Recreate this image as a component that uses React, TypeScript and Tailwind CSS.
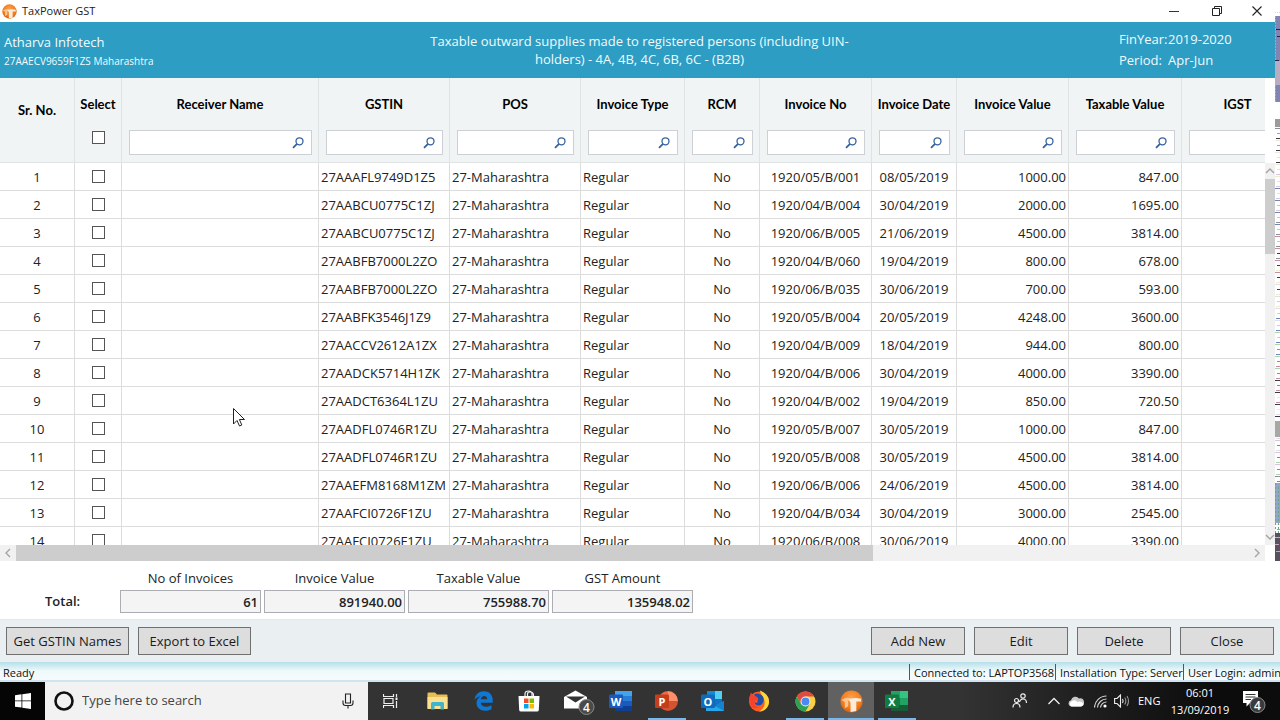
import { useState } from "react";
import type { ReactNode } from "react";

type Invoice = {
  gstin: string;
  no: string;
  date: string;
  value: string;
  taxable: string;
};

const invoices: Invoice[] = [
  { gstin: "27AAAFL9749D1Z5", no: "1920/05/B/001", date: "08/05/2019", value: "1000.00", taxable: "847.00" },
  { gstin: "27AABCU0775C1ZJ", no: "1920/04/B/004", date: "30/04/2019", value: "2000.00", taxable: "1695.00" },
  { gstin: "27AABCU0775C1ZJ", no: "1920/06/B/005", date: "21/06/2019", value: "4500.00", taxable: "3814.00" },
  { gstin: "27AABFB7000L2ZO", no: "1920/04/B/060", date: "19/04/2019", value: "800.00", taxable: "678.00" },
  { gstin: "27AABFB7000L2ZO", no: "1920/06/B/035", date: "30/06/2019", value: "700.00", taxable: "593.00" },
  { gstin: "27AABFK3546J1Z9", no: "1920/05/B/004", date: "20/05/2019", value: "4248.00", taxable: "3600.00" },
  { gstin: "27AACCV2612A1ZX", no: "1920/04/B/009", date: "18/04/2019", value: "944.00", taxable: "800.00" },
  { gstin: "27AADCK5714H1ZK", no: "1920/04/B/006", date: "30/04/2019", value: "4000.00", taxable: "3390.00" },
  { gstin: "27AADCT6364L1ZU", no: "1920/04/B/002", date: "19/04/2019", value: "850.00", taxable: "720.50" },
  { gstin: "27AADFL0746R1ZU", no: "1920/05/B/007", date: "30/05/2019", value: "1000.00", taxable: "847.00" },
  { gstin: "27AADFL0746R1ZU", no: "1920/05/B/008", date: "30/05/2019", value: "4500.00", taxable: "3814.00" },
  { gstin: "27AAEFM8168M1ZM", no: "1920/06/B/006", date: "24/06/2019", value: "4500.00", taxable: "3814.00" },
  { gstin: "27AAFCI0726F1ZU", no: "1920/04/B/034", date: "30/04/2019", value: "3000.00", taxable: "2545.00" },
  { gstin: "27AAFCI0726F1ZU", no: "1920/06/B/008", date: "30/06/2019", value: "4000.00", taxable: "3390.00" },
];

const filterColumns = [
  { label: "Receiver Name", width: 197 },
  { label: "GSTIN", width: 131 },
  { label: "POS", width: 131 },
  { label: "Invoice Type", width: 104 },
  { label: "RCM", width: 75 },
  { label: "Invoice No", width: 112 },
  { label: "Invoice Date", width: 85 },
  { label: "Invoice Value", width: 112 },
  { label: "Taxable Value", width: 113 },
  { label: "IGST", width: 112 },
];

const totals = [
  { id: "count", label: "No of Invoices", value: "61" },
  { id: "invoice-value", label: "Invoice Value", value: "891940.00" },
  { id: "taxable-value", label: "Taxable Value", value: "755988.70" },
  { id: "gst-amount", label: "GST Amount", value: "135948.02" },
];

const cell = "h-7 border-r border-b border-[#dcdcdc] p-0 px-0.5";
const checkbox = "block size-[13px] appearance-none border border-[#555] bg-white checked:bg-[#2d9dc3]";
const button = "h-7 border border-[#707070] bg-[#dddddd] text-[13px] leading-4 text-[#1a1a1a] hover:bg-[#cfe6f2]";

function AppLogo({ size }: { size: number }) {
  return (
    <svg width={size} height={size} viewBox="0 0 24 24" aria-hidden="true">
      <defs>
        <radialGradient id="logo" cx="0.5" cy="0.35" r="0.65">
          <stop offset="0" stopColor="#ffa24a" />
          <stop offset="0.7" stopColor="#f07a1c" />
          <stop offset="1" stopColor="#d9600f" />
        </radialGradient>
      </defs>
      <circle cx="12" cy="12" r="11.5" fill="url(#logo)" />
      <path d="M1.500 10.500Q6 7 12 8.500L8.500 11V17L5 19V12.500Z" fill="#fbc493" />
      <path d="M8.500 10.500Q12 7 22 9V12H17V22L11 23V13.500Q11 11.500 8.500 10.500Z" fill="#fdebd9" />
    </svg>
  );
}

function SearchGlyph() {
  return (
    <svg width="12" height="12" viewBox="0 0 12 12" fill="none" stroke="#35609f" aria-hidden="true">
      <circle cx="7.500" cy="4.300" r="3.500" strokeWidth="1.300" />
      <path d="M5 6.800L1 10.800" strokeWidth="1.800" />
    </svg>
  );
}

function Arrow({ d }: { d: string }) {
  return (
    <svg width="10" height="10" viewBox="0 0 10 10" fill="none" stroke="#a5a5a5" strokeWidth="1.400" aria-hidden="true">
      <path d={d} />
    </svg>
  );
}

// Sliver of the window behind, visible past the right edge
const sliverColors = ["#8a8f9c", "#d9c6da", "#3a3a4a", "#a8d8b0", "#e0dfe6", "#c8909a", "#6f86b8", "#ecebd0"];

function BackWindowSliver() {
  const dashes = Array.from({ length: 108 }, (_, i) => ({
    y: 128 + i * 4 + ((i * 7) % 3),
    x: (i * 5) % 3,
    color: sliverColors[(i * 5 + (i >> 2)) % sliverColors.length],
  }));
  return (
    <svg width="5" height="562" viewBox="0 0 5 562" className="shrink-0 bg-white" aria-hidden="true">
      <path d="M0 12.500H5" stroke="#cfe3a8" strokeDasharray="1 1" />
      <rect y="16" width="5" height="86" fill="#8085b4" />
      <path d="M0 29.500H5M2 36.500H5M0 60.500H4M1 80.500H5" stroke="#23234a" />
      <path d="M0.500 16V102" stroke="#7fc08c" strokeDasharray="2 1" />
      <rect y="61" width="5" height="24" fill="#b9adc4" />
      <rect y="119" width="5" height="8" fill="#9b9b9b" />
      {dashes.map((d) => (
        <rect key={d.y} x={d.x} y={d.y} width={5 - d.x} height="1" fill={d.color} />
      ))}
      <rect y="421" width="5" height="16" fill="#a5a8a5" />
      <rect y="483" width="5" height="40" fill="#8fa5c6" />
      <path d="M0.500 483V560M3.500 487V560" stroke="#69a58b" strokeDasharray="2 2" />
      <rect y="533" width="5" height="28" fill="#57505f" />
      <path d="M0 537.500H5M0 544.500H4M1 551.500H5" stroke="#c7a9c8" />
    </svg>
  );
}

function TitleBar() {
  return (
    <header className="flex h-[22px] shrink-0 items-center bg-white pl-0.5">
      <AppLogo size={15} />
      <span className="ml-[5px] flex-1 text-[11px] leading-4 text-[#222]">TaxPower GST</span>
      <button aria-label="Minimize" className="flex h-5 w-[43px] items-center justify-center">
        <svg width="10" height="10" viewBox="0 0 10 10" stroke="#333">
          <path d="M0 5.500H10" />
        </svg>
      </button>
      <button aria-label="Restore" className="flex h-5 w-[43px] items-center justify-center">
        <svg width="10" height="10" viewBox="0 0 10 10" fill="none" stroke="#222">
          <path d="M0.500 2.500H7.500V9.500H0.500ZM2.500 2.500V0.500H9.500V7.500H7.500" />
        </svg>
      </button>
      <button aria-label="Close window" className="flex h-5 w-[37px] items-center justify-center">
        <svg width="10" height="10" viewBox="0 0 10 10" stroke="#222" strokeWidth="1.100">
          <path d="M0.500 0.500L9.500 9.500M9.500 0.500L0.500 9.500" />
        </svg>
      </button>
    </header>
  );
}

function Banner() {
  return (
    <section className="grid h-14 shrink-0 grid-cols-[1fr_auto_1fr] bg-[#2d9dc3] text-[13px] text-[#f2fafd]">
      <div className="pt-2.5 pl-1">
        <p className="leading-5">Atharva Infotech</p>
        <p className="text-[10px] leading-[18px]">27AAECV9659F1ZS Maharashtra</p>
      </div>
      <h1 className="pt-2.5 pl-1 text-center leading-[18px]">
        Taxable outward supplies made to registered persons (including UIN-
        <br />
        holders) - 4A, 4B, 4C, 6B, 6C - (B2B)
      </h1>
      <dl className="grid w-[156px] grid-cols-[49px_1fr] content-start justify-self-end pt-[7px] leading-[21px] whitespace-nowrap">
        <dt>FinYear:</dt>
        <dd>2019-2020</dd>
        <dt>Period:</dt>
        <dd>Apr-Jun</dd>
      </dl>
    </section>
  );
}

function InvoiceGrid() {
  const [selected, setSelected] = useState<number[]>([]);

  const toggle = (i: number) =>
    setSelected(selected.includes(i) ? selected.filter((s) => s !== i) : [...selected, i]);

  return (
    <div className="flex min-h-0 flex-1">
      <div className="min-w-0 flex-1 overflow-hidden">
        <table className="w-[1294px] table-fixed border-separate border-spacing-0 text-[13px] leading-5 text-[#222]">
          <colgroup>
            <col className="w-[75px]" />
            <col className="w-[47px]" />
            {filterColumns.map((c) => (
              <col key={c.label} style={{ width: c.width }} />
            ))}
          </colgroup>
          <thead className="bg-[#f1f4f4] font-['Lato','Open_Sans',sans-serif] text-[13px] leading-5 text-black">
            <tr>
              <th className="h-[85px] border-r border-b border-[#e0e3e4] p-0 pb-5 font-bold">Sr. No.</th>
              <th className="border-r border-b border-[#e0e3e4] p-0 pt-4 align-top font-bold">
                <label className="flex flex-col items-center gap-[17px]">
                  Select
                  <input
                    type="checkbox"
                    className={checkbox}
                    checked={selected.length === invoices.length}
                    onChange={(e) => setSelected(e.target.checked ? invoices.map((_, i) => i) : [])}
                  />
                </label>
              </th>
              {filterColumns.map((c) => (
                <th key={c.label} className="border-r border-b border-[#e0e3e4] p-0 pt-4 align-top font-bold whitespace-nowrap">
                  {c.label}
                  <div className="mt-4 mr-1.5 ml-[7px] flex h-[25px] items-center border border-[#cdd0d4] bg-white pr-[7px]">
                    <input aria-label={`Filter ${c.label}`} className="h-full min-w-0 flex-1 px-1 font-normal outline-none" />
                    <SearchGlyph />
                  </div>
                </th>
              ))}
            </tr>
          </thead>
          <tbody className="bg-white">
            {invoices.map((inv, i) => (
              <tr key={inv.no}>
                <td className={`${cell} text-center`}>{i + 1}</td>
                <td className={cell}>
                  <input
                    type="checkbox"
                    aria-label={`Select invoice ${inv.no}`}
                    className={`${checkbox} mx-auto`}
                    checked={selected.includes(i)}
                    onChange={() => toggle(i)}
                  />
                </td>
                <td className={cell} />
                <td className={cell}>{inv.gstin}</td>
                <td className={cell}>27-Maharashtra</td>
                <td className={cell}>Regular</td>
                <td className={`${cell} text-center`}>No</td>
                <td className={`${cell} text-center`}>{inv.no}</td>
                <td className={`${cell} text-center`}>{inv.date}</td>
                <td className={`${cell} text-right`}>{inv.value}</td>
                <td className={`${cell} text-right`}>{inv.taxable}</td>
                <td className={cell} />
              </tr>
            ))}
          </tbody>
        </table>
      </div>
      <div className="flex w-2.5 shrink-0 flex-col bg-white pt-[85px]">
        <div className="flex flex-1 flex-col items-center bg-[#f1f1f1]">
          <div className="flex h-4 items-center">
            <Arrow d="M1 7L5 3L9 7" />
          </div>
          <div className="h-[75px] w-full bg-[#cdcdcd]" />
          <div className="mt-auto flex h-4 items-center">
            <Arrow d="M1 3L5 7L9 3" />
          </div>
        </div>
      </div>
    </div>
  );
}

function HorizontalScrollbar() {
  return (
    <div className="mr-2.5 flex h-4 shrink-0 items-center bg-[#f1f1f1]">
      <div className="flex w-4 justify-center">
        <Arrow d="M7 1L3 5L7 9" />
      </div>
      <div className="flex-1">
        <div className="h-4 w-[69.5%] bg-[#cdcdcd]" />
      </div>
      <div className="flex w-4 justify-center">
        <Arrow d="M3 1L7 5L3 9" />
      </div>
    </div>
  );
}

function Totals() {
  return (
    <section className="flex h-[58px] shrink-0 items-end bg-white pb-1.5 text-[13px] text-[#222]">
      <span className="w-[120px] pl-[45px] leading-6 font-semibold">Total:</span>
      <div className="flex gap-[3px]">
        {totals.map((t) => (
          <div key={t.id} className="w-[141px]">
            <label htmlFor={t.id} className="block text-center leading-6">
              {t.label}
            </label>
            <input
              id={t.id}
              readOnly
              value={t.value}
              className="block h-[23px] w-full border border-[#abadb3] bg-[#f4f4f5] px-0.5 text-right font-semibold text-[#222]"
            />
          </div>
        ))}
      </div>
    </section>
  );
}

function ActionBar() {
  return (
    <section className="flex h-[43px] shrink-0 items-center gap-[9px] border-t border-[#e3e7e9] bg-[#eaeff2] px-1.5">
      <button className={`${button} w-[123px]`}>Get GSTIN Names</button>
      <button className={`${button} w-[113px]`}>Export to Excel</button>
      <div className="ml-auto flex gap-[9px]">
        {["Add New", "Edit", "Delete", "Close"].map((label) => (
          <button key={label} className={`${button} w-[94px]`}>
            {label}
          </button>
        ))}
      </div>
    </section>
  );
}

function StatusBar() {
  return (
    <footer className="flex h-5 shrink-0 border-b-2 border-[#cfe3f1] bg-linear-to-b from-[#b4dfe9] via-[#f0fafa] to-[#f5fbfd] pt-0.5 pr-px text-[11px] leading-[18px] whitespace-nowrap text-[#111]">
      <span className="flex-1 pl-[3px]">Ready</span>
      <span className="w-[146px] border-l border-[#555] pl-1">Connected to: LAPTOP3568</span>
      <span className="w-[128px] border-l border-[#555] pl-1">Installation Type: Server</span>
      <span className="w-24 border-l border-[#555] pl-1">User Login: admin</span>
    </footer>
  );
}

function OfficeIcon({ letter, tile, children }: { letter: string; tile: string; children: ReactNode }) {
  return (
    <svg width="24" height="22" viewBox="0 0 24 22" aria-hidden="true">
      {children}
      <rect x="0" y="4.500" width="14" height="13.500" rx="1" fill={tile} />
      <text x="7" y="15.500" textAnchor="middle" fill="#fff" fontSize="11" fontWeight="700" fontFamily="Open Sans, sans-serif">
        {letter}
      </text>
    </svg>
  );
}

const taskbarItems: { name: string; running?: boolean; active?: boolean; icon: ReactNode }[] = [
  {
    name: "Task View",
    icon: (
      <svg width="16" height="16" viewBox="0 0 16 16" fill="none" stroke="#f0f0f0" strokeWidth="1.200">
        <path d="M0.500 1V3.500H10.500V1M0.500 15V12.500H10.500V15M1 5.500H10V10.500H1ZM13.500 1V4M13.500 8V15" />
        <rect x="12.500" y="4.500" width="2" height="2.500" fill="#f0f0f0" stroke="none" />
      </svg>
    ),
  },
  {
    name: "File Explorer",
    icon: (
      <svg width="21" height="18" viewBox="0 0 21 18">
        <path d="M0.500 1.500Q0.500 0.500 1.500 0.500H8L10 2.500H19.500Q20.500 2.500 20.500 3.500V16.500H0.500Z" fill="#e8bf55" />
        <path d="M0.500 5H20.500V17H0.500Z" fill="#fbe18f" />
        <path d="M4 17.500V11.500Q4 10 5.500 10H15.500Q17 10 17 11.500V17.500H13.500V14H7.500V17.500Z" fill="#3fb4cf" />
      </svg>
    ),
  },
  {
    name: "Edge",
    icon: (
      <svg width="19" height="20" viewBox="0 0 19 20">
        <path
          d="M0.500 9C1 3.500 5 0.300 10 0.300C15.800 0.300 18.700 4.500 18.700 9V11.700H6.700C7 14.300 9.200 15.700 12 15.700C14.200 15.700 16 15.100 17.500 14.200V18.200C16 19.100 13.800 19.700 11.300 19.700C6 19.700 2.500 16.500 2.500 12C2.500 9 4.200 6.700 6.800 5.300C4.200 5.600 1.800 6.900 0.500 9ZM6.900 8.200H13.200C13.200 6.200 12.200 4.900 10.200 4.900C8.400 4.900 7.100 6.200 6.900 8.200Z"
          fill="#0f78d4"
          fillRule="evenodd"
        />
      </svg>
    ),
  },
  {
    name: "Store",
    icon: (
      <svg width="22" height="22" viewBox="0 0 22 22">
        <path d="M7 6V4Q7 1 10.500 1Q14 1 14 4V6M9.500 6V4Q9.500 2 12 2Q15.500 2 15.500 5V6" fill="none" stroke="#f0f0f0" strokeWidth="1.200" />
        <path d="M0.500 6H21.500L20.800 20Q20.700 21.500 19 21.500H3Q1.300 21.500 1.200 20Z" fill="#fff" />
        <path d="M6 8.500H10.500V13H6Z" fill="#f25022" />
        <path d="M11.500 8.500H16V13H11.500Z" fill="#7fba00" />
        <path d="M6 14H10.500V18.500H6Z" fill="#00a4ef" />
        <path d="M11.500 14H16V18.500H11.500Z" fill="#ffb900" />
      </svg>
    ),
  },
  {
    name: "Mail",
    icon: (
      <svg width="40" height="30" viewBox="0 0 40 30">
        <path d="M9 11L20.500 4.500L32 11V22.500H9Z" fill="#fff" />
        <path d="M11 10.500H30L20.500 16.500Z" fill="#333" />
        <circle cx="31.500" cy="21" r="7.500" fill="#4a4a4a" stroke="#8a8a8a" />
        <text x="31.500" y="25.500" textAnchor="middle" fill="#fff" fontSize="12" fontWeight="600" fontFamily="Open Sans, sans-serif">
          4
        </text>
      </svg>
    ),
  },
  {
    name: "Word",
    icon: (
      <OfficeIcon letter="W" tile="#185abd">
        <path d="M6 1H23V6H6Z" fill="#41a5ee" />
        <path d="M6 6H23V11H6Z" fill="#2b7cd3" />
        <path d="M6 11H23V16H6Z" fill="#185abd" />
        <path d="M6 16H23V21H6Z" fill="#103f91" />
      </OfficeIcon>
    ),
  },
  {
    name: "PowerPoint",
    running: true,
    icon: (
      <OfficeIcon letter="P" tile="#c43e1c">
        <path d="M13 1A10 10 0 0 0 3 11H13Z" fill="#ed6c47" />
        <path d="M13 1A10 10 0 0 1 23 11H13Z" fill="#ff8f6b" />
        <path d="M3 11A10 10 0 0 0 23 11Z" fill="#d35230" />
      </OfficeIcon>
    ),
  },
  {
    name: "Outlook",
    icon: (
      <OfficeIcon letter="O" tile="#0f6cbd">
        <path d="M6 1H14V9H6Z" fill="#1489d4" />
        <path d="M14 1H21V9H14Z" fill="#50d0f5" />
        <path d="M6 9H21V15H6Z" fill="#1272c4" />
        <path d="M5 21V14L14 16L23 11V21Z" fill="#28a8ea" />
        <path d="M14 16L23 21V11Z" fill="#1583cf" />
      </OfficeIcon>
    ),
  },
  {
    name: "Firefox",
    icon: (
      <svg width="22" height="22" viewBox="0 0 22 22">
        <circle cx="11" cy="11.500" r="10" fill="#ff5b1f" />
        <path d="M12 0.500C17 3 21.500 6 21 12.500C20.500 18 16 21.500 11 21.500C15 19 17.500 16 16.500 11C16 7 12.500 5 12 0.500Z" fill="#ffd633" />
        <path d="M6 4.500C8.500 2.500 12.500 3.500 14.500 6C17 9.500 15.500 14.500 11.500 15.500C8.500 16 6.500 14 6.500 12Q8 13 10 12Q8.500 10.500 10.500 9Q8 8.500 6 4.500Z" fill="#234ea8" />
        <path d="M1 8L3 2.500L5 5.500L8.500 6.500L10.500 9L7.500 10.500L6 13Q7 17 11 17Q6 20.500 3 16Z" fill="#f7412c" />
      </svg>
    ),
  },
  {
    name: "Chrome",
    running: true,
    icon: (
      <svg width="21" height="21" viewBox="0 0 22 22">
        <circle cx="11" cy="11" r="10.500" fill="#f9cf46" />
        <path d="M1.900 5.750A10.500 10.500 0 0 1 20.100 5.750H11L6.500 13.500Z" fill="#df4b3d" />
        <path d="M1.900 5.750A10.500 10.500 0 0 0 11 21.500L15.500 13.600L11 16L6.450 13.600Z" fill="#2fa152" />
        <circle cx="11" cy="11" r="5.200" fill="#f4f4f4" />
        <circle cx="11" cy="11" r="4.200" fill="#4a8af4" />
      </svg>
    ),
  },
  { name: "TaxPower GST", running: true, active: true, icon: <AppLogo size={23} /> },
  {
    name: "Excel",
    running: true,
    icon: (
      <OfficeIcon letter="X" tile="#107c41">
        <path d="M6 1H15V8H6Z" fill="#21a366" />
        <path d="M15 1H23V8H15Z" fill="#33c481" />
        <path d="M6 8H15V15H6Z" fill="#107c41" />
        <path d="M15 8H23V15H15Z" fill="#21a366" />
        <path d="M6 15H23V21H6Z" fill="#185c37" />
      </OfficeIcon>
    ),
  },
];

function Tray() {
  return (
    <div className="ml-auto flex items-center text-white">
      <svg width="16" height="16" viewBox="0 0 16 16" fill="none" stroke="#eee" strokeWidth="1.200" aria-label="People">
        <circle cx="4.500" cy="7.500" r="2" />
        <path d="M1 14.500Q1 10.500 4.500 10.500Q8 10.500 8 14.500" />
        <circle cx="11" cy="3" r="2.200" />
        <path d="M7.500 9Q8 6 11 6Q14.500 6 14.500 10" />
      </svg>
      <svg className="ml-5" width="12" height="12" viewBox="0 0 12 12" fill="none" stroke="#eee" strokeWidth="1.300" aria-label="Show hidden icons">
        <path d="M0.500 9L6 3.500L11.500 9" />
      </svg>
      <svg className="ml-2" width="16" height="12" viewBox="0 0 16 12" aria-label="OneDrive">
        <path d="M3.500 11.500A3.200 3.200 0 0 1 3 5.200A4.500 4.500 0 0 1 11 3.500A4 4 0 0 1 13 11.500Z" fill="#c9c9c9" />
        <path d="M3.500 11.500A3 3 0 0 1 4 6Q7 4 9.500 7Q12 5.500 15 8A2.500 2.500 0 0 1 13 11.500Z" fill="#fff" />
      </svg>
      <svg className="ml-2.5" width="13" height="13" viewBox="0 0 13 13" fill="none" stroke="#d5d5d5" strokeWidth="1.200" aria-label="Network">
        <path d="M0.500 12.500A12 12 0 0 1 12.500 1M3.500 12.500A9 9 0 0 1 12.500 4M6.500 12.500A6 6 0 0 1 12.500 7" />
        <circle cx="11" cy="11" r="1.600" fill="#fff" stroke="none" />
      </svg>
      <svg className="ml-[7px]" width="16" height="14" viewBox="0 0 16 14" fill="none" stroke="#eee" strokeWidth="1.100" aria-label="Volume">
        <path d="M0.600 4.500H3L6.500 1V13L3 9.500H0.600Z" />
        <path d="M8.500 5Q9.800 7 8.500 9" />
        <path d="M10.700 3.500Q13 7 10.700 10.500M13 2Q16 7 13 12" stroke="#999" />
      </svg>
      <span className="ml-2 w-6 text-[11px]">ENG</span>
      <time className="ml-2 w-[60px] text-center text-[11px] leading-[17px] whitespace-nowrap">
        06:01
        <br />
        13/09/2019
      </time>
      <svg className="mr-3.5 ml-3" width="24" height="26" viewBox="0 0 24 26" aria-label="Notifications">
        <path d="M1 3H16V15H8L4.500 18.500V15H1Z" fill="#fff" />
        <path d="M3.500 6.500H13.500M3.500 9H13.500M3.500 11.500H9" stroke="#333" />
        <circle cx="15.500" cy="17" r="7.500" fill="#3b3b3b" stroke="#8a8a8a" />
        <text x="15.500" y="21.500" textAnchor="middle" fill="#fff" fontSize="12" fontWeight="600" fontFamily="Open Sans, sans-serif">
          4
        </text>
      </svg>
    </div>
  );
}

function Taskbar() {
  return (
    <nav className="flex h-[38px] shrink-0 bg-linear-to-r from-[#333333] from-75% to-[#0c0c0c] to-95%">
      <button aria-label="Start" className="flex w-[45px] items-center justify-center bg-[#050505]">
        <svg width="16" height="16" viewBox="0 0 16 16" fill="#fff">
          <path d="M0 2.200L6.500 1.300V7.500H0ZM7.300 1.200L16 0V7.500H7.300ZM0 8.300H6.500V14.600L0 13.700ZM7.300 8.300H16V16L7.300 14.700Z" />
        </svg>
      </button>
      <div className="flex w-[323px] items-center bg-[#f2f2f2] pr-3.5 pl-2">
        <svg width="22" height="22" viewBox="0 0 22 22" fill="none" stroke="#111" strokeWidth="2.600" aria-hidden="true">
          <circle cx="11" cy="11" r="8.500" />
        </svg>
        <input
          aria-label="Search Windows"
          placeholder="Type here to search"
          className="ml-[7px] min-w-0 flex-1 bg-transparent text-[13px] placeholder:text-[#444] outline-none"
        />
        <svg width="12" height="16" viewBox="0 0 12 16" fill="none" stroke="#222" strokeWidth="1.100" aria-label="Speak">
          <path d="M3.500 1H8.500V10H3.500ZM1 7.500V10Q1 12.500 3.500 12.500H8.500Q11 12.500 11 10V7.500M6 12.500V15.500" />
        </svg>
      </div>
      {taskbarItems.map((item) => (
        <button
          key={item.name}
          aria-label={item.name}
          className={`relative flex w-[46px] items-center justify-center ${item.active ? "bg-[#616161]" : ""}`}
        >
          {item.icon}
          {item.running && (
            <span className={`absolute bottom-0 h-0.5 bg-[#76b9ed] ${item.active ? "inset-x-0" : "inset-x-1"}`} />
          )}
        </button>
      ))}
      <Tray />
    </nav>
  );
}

export default function App() {
  return (
    <div className="relative flex h-screen flex-col overflow-hidden bg-white font-['Open_Sans','Noto_Sans',sans-serif]">
      <div className="flex min-h-0 flex-1 overflow-hidden">
        <main className="flex min-w-0 flex-1 flex-col">
          <TitleBar />
          <Banner />
          <InvoiceGrid />
          <HorizontalScrollbar />
        </main>
        <BackWindowSliver />
      </div>
      <Totals />
      <ActionBar />
      <StatusBar />
      <Taskbar />

      {/* Mouse pointer */}
      <svg className="pointer-events-none absolute top-[408px] left-[233px]" width="12" height="19" viewBox="0 0 12 19" aria-hidden="true">
        <path d="M0.500 0.500V16L4 12.500L6.500 18L8.800 17L6.400 11.500H11.500Z" fill="#fff" stroke="#222" />
      </svg>
    </div>
  );
}
